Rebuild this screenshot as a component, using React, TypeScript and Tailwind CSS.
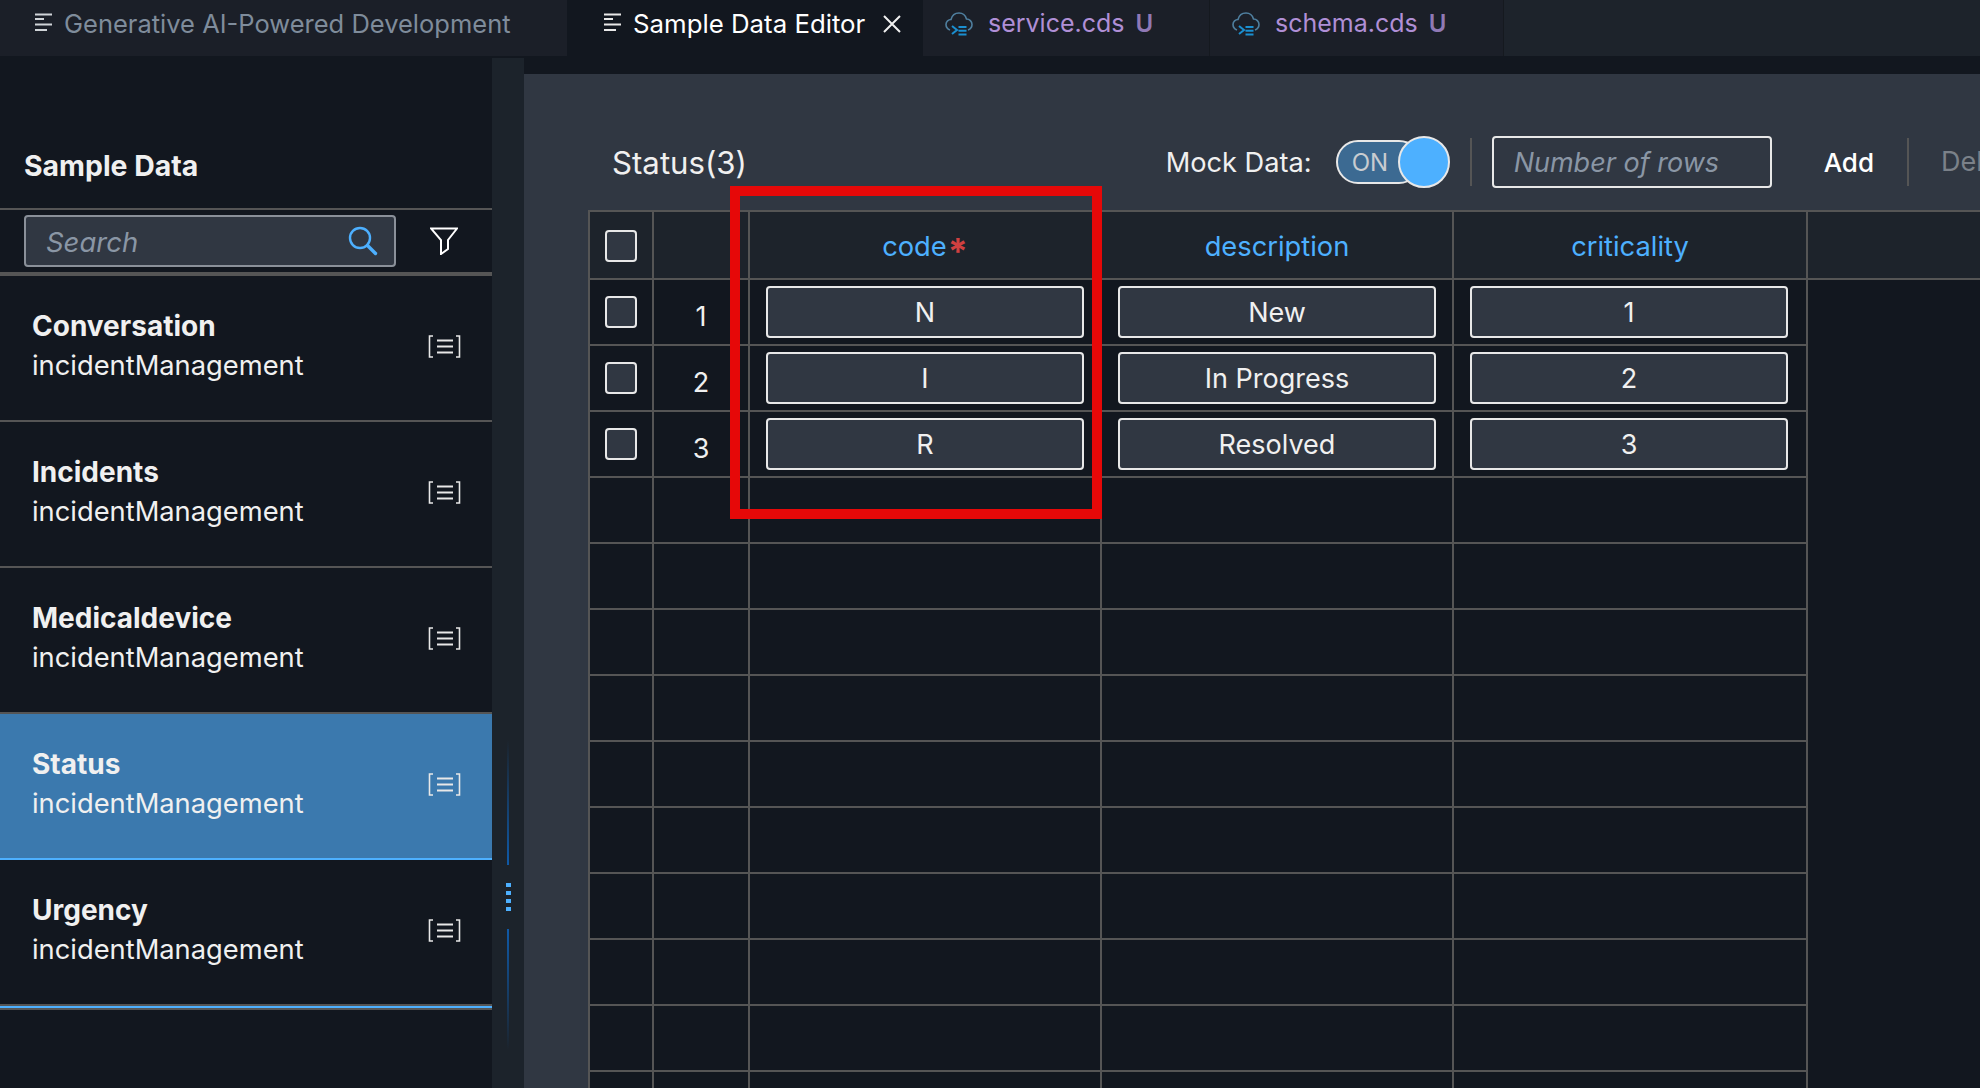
const ListIcon = ({ color }: { color: string }) => (
  <svg width="17" height="19" viewBox="0 0 17 19" fill="none" stroke={color} strokeWidth="2" className="shrink-0 -mt-[3px]">
    <path d="M0 1.500h17M0 6h9M0 11.500h17M0 17h12" />
  </svg>
);

const CloudIcon = () => (
  <svg width="28" height="24" viewBox="0 0 28 24" fill="none" className="shrink-0">
    <path
      d="M5 18C2.500 17 1 14.800 1 12.500 1 9.500 3.500 7.500 6 7.500 7 3.500 10 1 14 1c4 0 6.500 2.500 7.500 6 3 0 5.500 2.500 5.500 5.500 0 2.500-1.500 4.500-4 5.500"
      stroke="#4f7f9f"
      strokeWidth="1.6"
    />
    <path d="M7 14l5 4-5 4M13.500 15h8M13.500 18.800h8M13.500 22.500h8" stroke="#1b8fd0" strokeWidth="2" />
  </svg>
);

const SearchIcon = () => (
  <svg width="30" height="30" viewBox="0 0 30 30" fill="none" stroke="#4db0ff" strokeWidth="2.4">
    <circle cx="12" cy="12" r="10" />
    <path d="M19.500 19.500l8 8" strokeWidth="3.4" strokeLinecap="round" />
  </svg>
);

const FunnelIcon = () => (
  <svg width="28" height="28" viewBox="0 0 28 28" fill="none" stroke="#ffffff" strokeWidth="2">
    <path d="M1 1.500h26L18 13v9l-7 5V13z" />
  </svg>
);

const EntityIcon = () => (
  <svg width="33" height="23" viewBox="0 0 33 23" fill="none" stroke="#e8e8e8">
    <path d="M5 1H1.500v21H5M28 1h3.500v21H28" strokeWidth="1.6" />
    <path d="M9 5.500h16M9 11.500h16M9 17.500h16" strokeWidth="2" />
  </svg>
);

const FileTab = ({ name, width }: { name: string; width: string }) => (
  <div className={`${width} h-full flex items-center pl-[22px] pb-2 bg-[#1b1f28] border-r border-[#15191f]`}>
    <CloudIcon />
    <span className="ml-[15px] text-[25px] text-[#b08fd6] whitespace-nowrap">{name}</span>
    <span className="ml-[11px] text-[24px] font-semibold text-[#9079b5]">U</span>
  </div>
);

const entities = ["Conversation", "Incidents", "Medicaldevice", "Status", "Urgency"];

const Sidebar = () => (
  <div className="w-[492px] shrink-0 flex flex-col">
    <div className="h-[152px] flex items-end pl-6 pb-[24px]">
      <h1 className="text-[28.4px] font-bold text-[#f0f0f0] leading-9">Sample Data</h1>
    </div>
    <div className="h-[68px] border-t-2 border-b-4 border-[#555] flex items-center pl-6 gap-[34px]">
      <div className="w-[372px] h-[52px] bg-[#303742] border-2 border-[#8a9099] rounded flex items-center justify-between pl-[20px] pr-[16px]">
        <span className="italic text-[27.5px] text-[#8a96a5] pt-[3px]">Search</span>
        <SearchIcon />
      </div>
      <FunnelIcon />
    </div>
    {entities.map((name) => {
      const selected = name === "Status";
      return (
        <div
          key={name}
          className={`h-[146px] flex items-center justify-between pl-8 pr-[31px] pb-1 border-b-2 ${
            selected ? "bg-[#3b79ae] border-[#4db0ff]" : "border-[#555]"
          }`}
        >
          <div className="text-[#f0f0f0]">
            <div className="text-[28px] font-bold leading-10">{name}</div>
            <div className="text-[27.3px] leading-10">incidentManagement</div>
          </div>
          <EntityIcon />
        </div>
      );
    })}
    <div className="h-[4px] bg-[#4db0ff] border-b-2 border-[#555]" />
  </div>
);

const Sash = () => (
  <div className="w-[32px] shrink-0 mt-[2px] bg-[#1c232b] flex flex-col items-center justify-end pb-[38px]">
    <div className="w-[2px] h-[125px] bg-gradient-to-b from-transparent to-[#0f5aa8]" />
    <div className="flex flex-col gap-[4px] my-[18px]">
      <div className="w-[5px] h-[4px] bg-[#4db0ff]" />
      <div className="w-[5px] h-[4px] bg-[#4db0ff]" />
      <div className="w-[5px] h-[4px] bg-[#4db0ff]" />
      <div className="w-[5px] h-[4px] bg-[#4db0ff]" />
    </div>
    <div className="w-[2px] h-[121px] bg-gradient-to-t from-transparent to-[#0f5aa8]" />
  </div>
);

const Checkbox = () => <div className="w-8 h-8 bg-[#303742] border-2 border-[#e8e8e8] rounded" />;

const Cell = ({ value }: { value: string }) => (
  <div className="flex items-center border-r-2 border-b-2 border-[#555] pl-4">
    <div className="w-[318px] h-[52px] pt-[3px] bg-[#303742] border-2 border-[#e8e8e8] rounded flex items-center justify-center text-[27px] text-[#f0f0f0]">
      {value}
    </div>
  </div>
);

const rows = [
  ["N", "New", "1"],
  ["I", "In Progress", "2"],
  ["R", "Resolved", "3"],
];

const gridCols = "grid-cols-[64px_96px_352px_352px_354px]";

const Table = () => (
  <div className="relative ml-[64px] flex-1 min-h-0 bg-[#12171f]">
    <div className="flex h-[70px] bg-[#1d232b] border-t-2 border-b-2 border-[#555]">
      <div className={`grid ${gridCols} border-l-2 border-[#555]`}>
        <div className="flex items-center pl-[15px] pt-[2px] border-r-2 border-[#555]">
          <Checkbox />
        </div>
        <div className="border-r-2 border-[#555]" />
        {["code", "description", "criticality"].map((h) => (
          <div key={h} className="flex items-center justify-center pt-1 text-[27.3px] text-[#4db0ff] border-r-2 border-[#555]">
            {h}
            {h === "code" && <span className="text-[#d04040] text-[36px] font-bold leading-none ml-[1px] pt-2">*</span>}
          </div>
        ))}
      </div>
    </div>
    <div className={`grid ${gridCols} auto-rows-[66px] w-fit border-l-2 border-[#555]`}>
      {rows.map((r, i) => (
        <div key={r[0]} className="contents">
          <div className="flex items-center pl-[15px] border-r-2 border-b-2 border-[#555]">
            <Checkbox />
          </div>
          <div className="flex items-center justify-center pt-[10px] text-[27px] text-[#f0f0f0] border-r-2 border-b-2 border-[#555]">
            {i + 1}
          </div>
          {r.map((v) => (
            <Cell key={v} value={v} />
          ))}
        </div>
      ))}
      {Array.from({ length: 50 }).map((_, i) => (
        <div key={i} className="border-r-2 border-b-2 border-[#555]" />
      ))}
    </div>
    {/* highlight drawn over the code column */}
    <div className="absolute left-[142px] top-[-24px] w-[372px] h-[333px] border-[10px] border-[#e60808]" />
  </div>
);

const Main = () => (
  <div className="flex-1 min-w-0 mt-[18px] bg-[#303742] flex flex-col overflow-hidden">
    <div className="h-[136px] shrink-0 flex items-end pb-[22px] pl-[88px] pr-0">
      <div className="text-[31.2px] text-[#f0f0f0] leading-10 mb-[5px]">Status(3)</div>
      <div className="ml-auto flex items-center h-[52px] whitespace-nowrap">
        <span className="text-[27.2px] text-[#f0f0f0] pt-[3px]">Mock Data:</span>
        <div className="relative ml-6 w-[114px] h-[52px] flex items-center">
          <div className="w-[85px] h-[44px] pt-[2px] bg-[#3c6a92] border-2 border-[#e8e8e8] rounded-full flex items-center pl-[14px] text-[24px] text-[#c8ccd0]">
            ON
          </div>
          <div className="absolute right-0 top-0 w-[52px] h-[52px] rounded-full bg-[#4db0ff] border-2 border-[#e8e8e8]" />
        </div>
        <div className="w-[2px] h-[48px] bg-[#555] ml-5" />
        <div className="w-[280px] h-[52px] pt-[3px] ml-[20px] border-2 border-[#e8e8e8] rounded flex items-center pl-[20px] italic text-[27px] text-[#8a96a5]">
          Number of rows
        </div>
        <span className="ml-[52px] text-[26px] font-medium text-white">Add</span>
        <div className="w-[2px] h-[48px] bg-[#555] ml-[33px]" />
        <div className="ml-[32px] w-[39px] overflow-hidden text-[27px] text-[#7b8189]">Delete</div>
      </div>
    </div>
    <Table />
  </div>
);

export default function App() {
  return (
    <div className="w-[1980px] h-[1088px] overflow-hidden bg-[#12171f] flex flex-col font-['Inter',sans-serif]">
      <div className="h-14 shrink-0 flex bg-[#1d232b]">
        <div className="w-[567px] h-full flex items-center pl-[35px] pb-2 gap-3 bg-[#1b1f28]">
          <ListIcon color="#d0d4d8" />
          <span className="text-[25.5px] text-[#7f8c9b] whitespace-nowrap">Generative AI-Powered Development</span>
        </div>
        <div className="w-[356px] h-full flex items-center pl-[37px] pb-2 gap-3 bg-[#12171f]">
          <ListIcon color="#e8e8e8" />
          <span className="text-[25.8px] text-white whitespace-nowrap">Sample Data Editor</span>
          <svg width="18" height="18" viewBox="0 0 18 18" stroke="#f0f0f0" strokeWidth="2" className="ml-[6px]">
            <path d="M1 1l16 16M17 1L1 17" />
          </svg>
        </div>
        <FileTab name="service.cds" width="w-[287px]" />
        <FileTab name="schema.cds" width="w-[294px]" />
      </div>
      <div className="flex-1 min-h-0 flex">
        <Sidebar />
        <Sash />
        <Main />
      </div>
    </div>
  );
}
